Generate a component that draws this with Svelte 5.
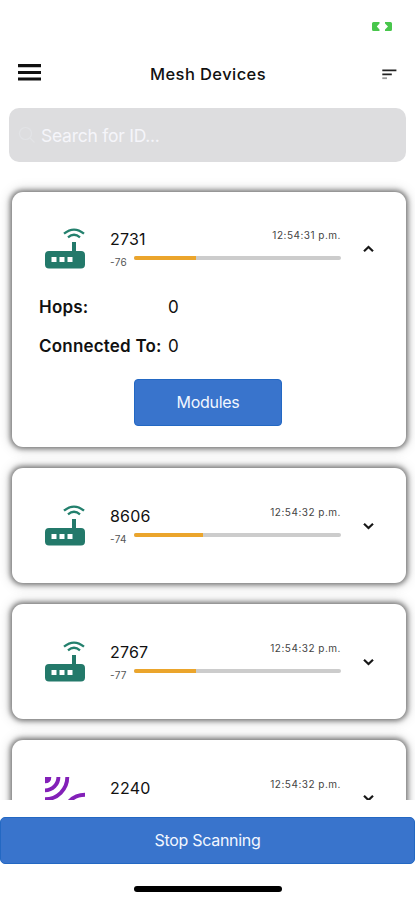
<script>
  const devices = [
    { id: '2731', rssi: -76, level: 30, time: '12:54:31 p.m.', open: true, kind: 'router' },
    { id: '8606', rssi: -74, level: 33.5, time: '12:54:32 p.m.', open: false, kind: 'router' },
    { id: '2767', rssi: -77, level: 30, time: '12:54:32 p.m.', open: false, kind: 'router' },
    { id: '2240', rssi: null, level: 0, time: '12:54:32 p.m.', open: false, kind: 'sensor' }
  ];
</script>

<div class="screen">
  <div class="status">
    <svg width="20" height="9" viewBox="0 0 20 9" fill="#48c64c">
      <path d="M1.5 0H7.5V1.5L4.8 4.5L7.5 7.5V9H1.5Q0 9 0 7.5V1.5Q0 0 1.5 0Z" />
      <path d="M13 0H18.5Q20 0 20 1.5V7.5Q20 9 18.5 9H13V7.5L16 4.5L13 1.5Z" />
    </svg>
  </div>
  <header>
    <svg width="23" height="17" viewBox="0 0 23 17" fill="#111">
      <path d="M0 0H23V3.2H0ZM0 6.9H23V10H0ZM0 13.5H23V16.6H0Z" />
    </svg>
    <h1>Mesh Devices</h1>
    <svg width="15" height="11" viewBox="0 0 15 11">
      <path d="M0.3 1.4H14.4M0.3 5.3H9.8" stroke="#222" stroke-width="1.8" />
      <path d="M0.3 9.2H5" stroke="#999" stroke-width="1.8" />
    </svg>
  </header>
  <div class="search">
    <svg width="18" height="18" viewBox="0 0 18 18" fill="none" stroke="#e2e3e6" stroke-width="1.2">
      <circle cx="7.5" cy="7.5" r="6" /><path d="M12 12L16.5 16.5" />
    </svg>
    <span>Search for ID...</span>
  </div>
  <main>
    {#each devices as device}
      <article>
        <div class="summary">
          {#if device.kind === 'router'}
            <svg class="icon" width="40" height="41" viewBox="0 0 40 41">
              <path d="M19 5.7Q29 -2.5 39 5.7M23 9.3Q29 4.3 35 9.3" fill="none" stroke="#23806d" stroke-width="2.3" />
              <path d="M27 14H31V23H36Q40 23 40 27V36.5Q40 40.5 36 40.5H4Q0 40.5 0 36.5V27Q0 23 4 23H27Z" fill="#23796a" />
              <path d="M6.5 29H11.5V34H6.5ZM14.5 29H19.5V34H14.5ZM22.5 29H27.5V34H22.5Z" fill="#fff" />
            </svg>
          {:else}
            <svg class="icon" width="40" height="41" viewBox="0 0 40 41">
              <path d="M0 0H6.3Q6.3 6.3 0 6.3Z" fill="#8320b8" />
              <path d="M13.4 0A13.4 13.4 0 0 1 0 13.4M22.3 0A22.3 22.3 0 0 1 0 22.3M40 17.8A22.2 22.2 0 0 0 17.8 40M40 26.6A13.4 13.4 0 0 0 26.6 40" fill="none" stroke="#8320b8" stroke-width="3.9" />
            </svg>
          {/if}
          <div class="info">
            <div class="line"><span class="name">{device.id}</span><time>{device.time}</time></div>
            {#if device.rssi !== null}
              <div class="signal">
                <span class="rssi">{device.rssi}</span>
                <div class="track"><div class="fill" style="width: {device.level}%"></div></div>
              </div>
            {/if}
          </div>
          <svg class="chevron" width="11" height="8" viewBox="0 0 11 8" fill="none" stroke="#181818" stroke-width="2.2">
            <path d={device.open ? 'M1 6.2L5.5 1.9L10 6.2' : 'M1 1.8L5.5 6.1L10 1.8'} />
          </svg>
        </div>
        {#if device.open}
          <dl>
            <dt>Hops:</dt><dd>0</dd>
            <dt>Connected To:</dt><dd>0</dd>
          </dl>
          <button class="modules">Modules</button>
        {/if}
      </article>
    {/each}
  </main>
  <button class="stop">Stop Scanning</button>
  <div class="home"></div>
</div>

<style>
  .screen {
    display: flex;
    flex-direction: column;
    width: 415px;
    height: 900px;
    overflow: hidden;
    background: #fff;
    color: #111;
    font-family: Inter, 'Liberation Sans', sans-serif;
  }
  svg { display: block; flex: none; }
  .status { display: flex; flex: none; justify-content: flex-end; height: 32px; padding: 22px 23px 0 0; box-sizing: border-box; }
  header { display: flex; flex: none; align-items: center; justify-content: space-between; height: 76px; padding: 9px 18px 6px; box-sizing: border-box; }
  header svg:first-child { margin-top: 1px; }
  header svg:last-child { margin: 5px 0 0 7px; }
  h1 { margin: 5px 0 0; font-size: 16.5px; font-weight: 500; line-height: 20px; letter-spacing: 0.42px; }
  .search { display: flex; align-items: center; flex: none; height: 54px; margin: 0 9px; padding-left: 9px; border-radius: 10px; background: #dddddf; box-sizing: border-box; color: #f5f5fa; font-size: 17.5px; }
  .search span { margin-left: 5px; letter-spacing: -0.25px; }
  main { flex: none; height: 625px; margin-top: 13px; padding: 17px 9px 0 12px; overflow: hidden; box-sizing: border-box; }
  article { height: 115px; margin-bottom: 21px; border-radius: 11px; background: #fff; box-shadow: 0 0 5px 1.5px rgba(0, 0, 0, 0.46), 0 0 13px 1px rgba(0, 0, 0, 0.22); overflow: hidden; }
  article:first-child { height: 255px; }
  .summary { display: flex; height: 77px; padding: 37px 32px 0 33px; }
  article:first-child .summary { padding-top: 36px; }
  .info { width: 231px; margin-left: 25px; }
  .line { display: flex; justify-content: space-between; height: 24px; }
  .name { font-size: 16px; line-height: 22px; letter-spacing: 0.2px; }
  time { font-size: 10px; line-height: 15px; letter-spacing: 0.5px; margin-right: 0; color: #444; }
  .signal { display: flex; justify-content: space-between; height: 18px; }
  .rssi { font-size: 10px; line-height: 20px; letter-spacing: 0.3px; color: #555; }
  .track { flex: none; width: 207px; height: 4px; margin-top: 4px; border-radius: 2px; background: #ccc; overflow: hidden; }
  .fill { height: 100%; background: #eba52c; }
  .chevron { margin: 17px 0 0 22px; }
  dl { display: grid; grid-template-columns: 129px auto; grid-auto-rows: 38.5px; margin: -17px 0 0 27px; align-items: center; font-size: 17px; }
  dt { font-weight: 600; white-space: nowrap; letter-spacing: 0.2px; }
  dd { margin: 0; }
  button { display: block; flex: none; padding: 0 0 1px; border: 1px solid #2368c3; background: #3974cc; color: #f2f7ff; font-family: inherit; font-size: 16px; }
  .modules { width: 148px; height: 47px; margin: 14px 0 0 122px; border-radius: 4px; letter-spacing: -0.3px; }
  .stop { width: 415px; height: 47px; margin-top: 17px; border-radius: 5px; letter-spacing: -0.3px; }
  .home { width: 148px; height: 6px; flex: none; margin: 22px auto 0; border-radius: 3px; background: #000; }
</style>
